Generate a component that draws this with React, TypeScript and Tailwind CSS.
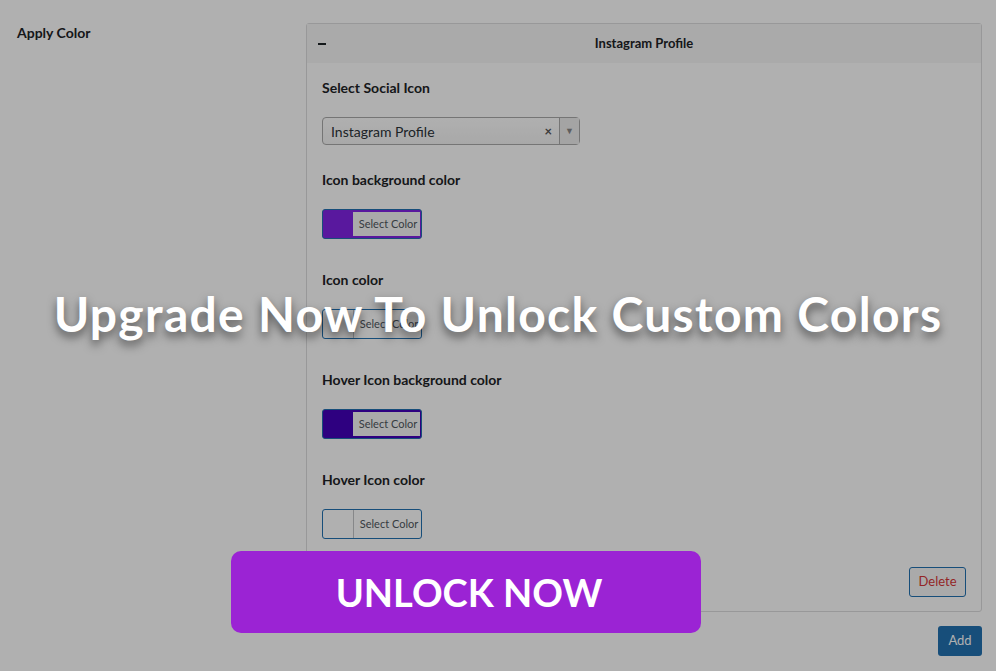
import React from "react";

const colorFields = [
  { label: "Icon background color", swatch: "bg-[#8223e5]", filled: true },
  { label: "Icon color", swatch: "bg-transparent", filled: false },
  { label: "Hover Icon background color", swatch: "bg-[#4300ba]", filled: true },
  { label: "Hover Icon color", swatch: "bg-transparent", filled: false },
];

function ColorButton({ swatch, filled }: { swatch: string; filled: boolean }) {
  return (
    <div
      className={`flex h-[30px] w-[100px] overflow-hidden rounded-[3px] border border-[#2271b1] ${swatch}`}
    >
      <span className="w-[30px]" />
      <span
        className={`flex flex-1 items-center justify-center pl-[3px] text-[11px] text-[#50575e] ${
          filled ? "my-[2px] mr-[1px] bg-[#f6f7f7]" : "border-l border-[#c3c4c7]"
        }`}
      >
        Select Color
      </span>
    </div>
  );
}

function SocialPanel() {
  return (
    <div className="w-[676px] rounded-[3px] border border-[#dcdcde] bg-white">
      <div className="relative flex h-[39px] items-center bg-[#f6f7f7] px-[11px]">
        <span className="h-[2px] w-[8px] bg-[#1d2327]" />
        <span className="absolute inset-x-0 text-center text-[13px] font-bold text-[#1d2327]">
          Instagram Profile
        </span>
      </div>
      <div className="px-[15px] pt-[15px] pb-[14px]">
        <div className="text-[14px] font-bold leading-[20px] text-[#1d2327]">Select Social Icon</div>
        <div className="mt-[19px] flex h-[28px] w-[258px] items-center rounded-[4px] border border-[#aaaaaa] bg-gradient-to-b from-white to-[#f4f4f4]">
          <span className="flex-1 pl-[8px] text-[14px] text-[#2c3338]">Instagram Profile</span>
          <span className="pr-[7px] text-[13px] font-bold leading-none text-[#555]">×</span>
          <span className="flex h-full w-[20px] items-center justify-center border-l border-[#aaaaaa] bg-[#eeeeee] text-[9px] text-[#888]">
            ▼
          </span>
        </div>
        {colorFields.map((f, i) => (
          <div key={f.label} className={i === 0 ? "mt-[25px]" : "mt-[31px]"}>
            <div className="text-[14px] font-bold leading-[20px] text-[#1d2327]">{f.label}</div>
            <div className="mt-[19px]">
              <ColorButton swatch={f.swatch} filled={f.filled} />
            </div>
          </div>
        ))}
        <div className="mt-[28px] flex justify-end">
          <button className="h-[30px] w-[57px] rounded-[3px] border border-[#2271b1] bg-[#f6f7f7] text-[13px] text-[#d63638]">
            Delete
          </button>
        </div>
      </div>
    </div>
  );
}

export default function App() {
  return (
    <div
      className="relative h-[671px] w-[996px] overflow-hidden bg-white"
      style={{ fontFamily: "Lato, 'Liberation Sans', sans-serif" }}
    >
      <div className="flex pl-[17px] pr-[13px] pt-[23px]">
        <div className="w-[289px] pt-[1px] text-[14px] font-bold leading-[18px] text-[#1d2327]">
          Apply Color
        </div>
        <div className="flex flex-col items-end">
          <SocialPanel />
          <button className="mt-[14px] h-[30px] w-[44px] rounded-[3px] bg-[#2271b1] text-[13px] text-white">
            Add
          </button>
        </div>
      </div>

      <div className="absolute inset-0 flex flex-col bg-black/[0.31]">
        <div className="mt-[285px] text-center text-[48px] font-bold leading-[58px] tracking-[1.3px] text-white [text-shadow:0_5px_10px_rgba(0,0,0,0.55)]">
          Upgrade Now To Unlock Custom Colors
        </div>
        <button className="ml-[231px] mt-[208px] flex h-[82px] w-[470px] items-center justify-center rounded-[10px] bg-[#9b23d4] pl-[6px] text-[38px] font-bold text-white">
          UNLOCK NOW
        </button>
      </div>
    </div>
  );
}
